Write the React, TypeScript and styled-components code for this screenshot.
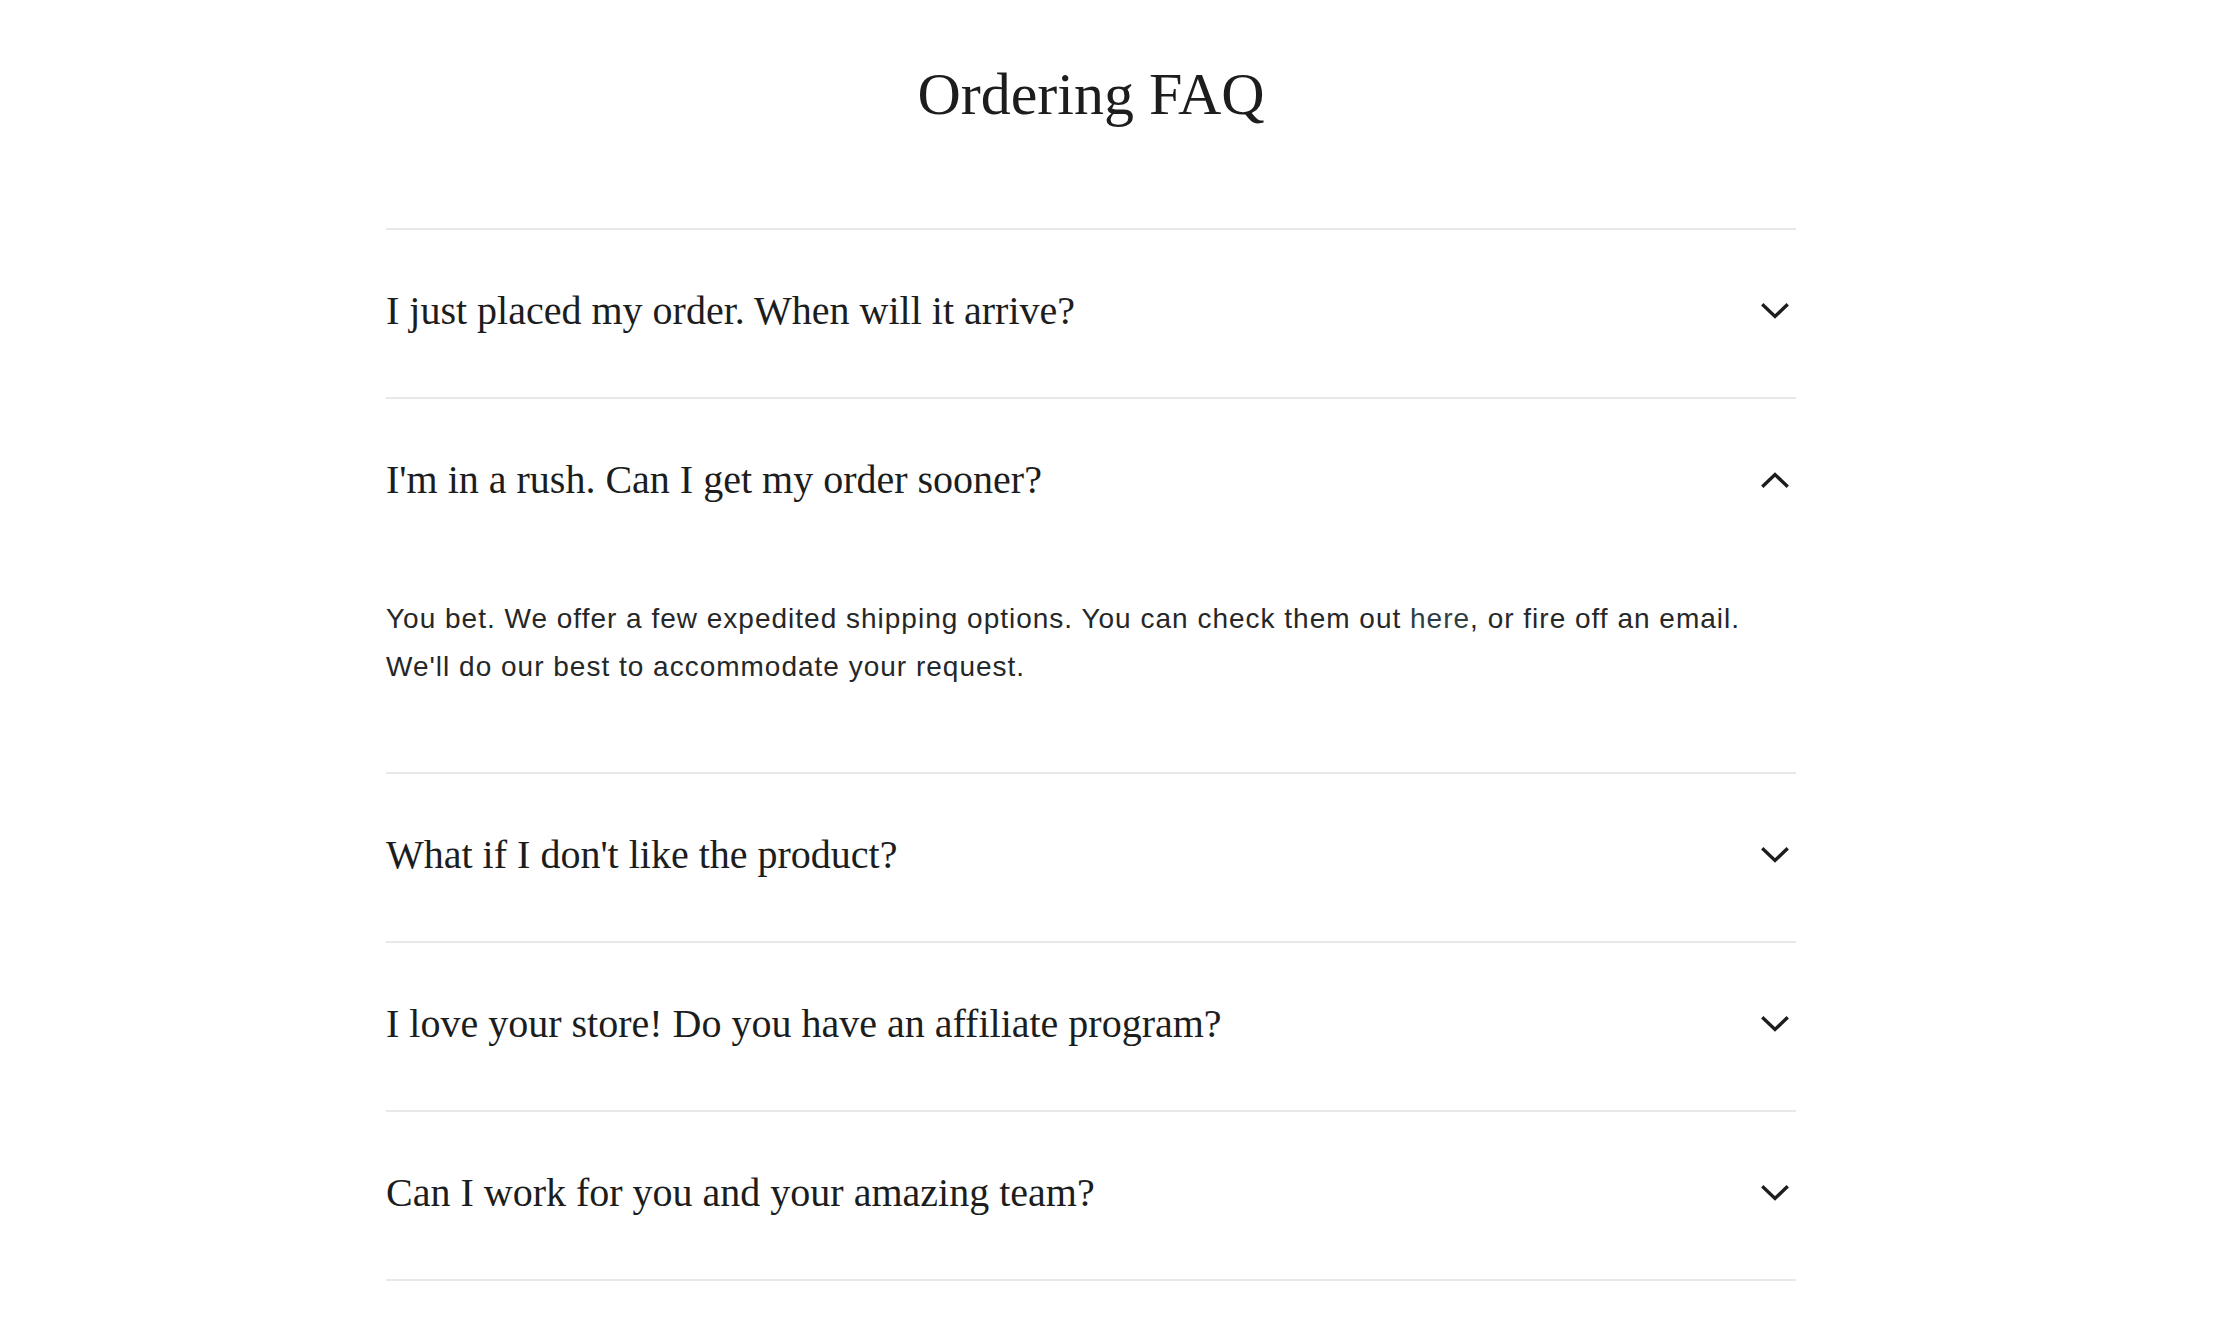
import React, { useState } from "react"
import styled, { createGlobalStyle } from "styled-components"

const GlobalStyle = createGlobalStyle`
  html, body {
    margin: 0;
    padding: 0;
    background: #ffffff;
  }
`

interface Faq {
  question: string,
  answer?: () => React.ReactNode,
}

const faqs: Faq[] = [
  { question: "I just placed my order. When will it arrive?" },
  {
    question: "I'm in a rush. Can I get my order sooner?",
    answer: () => (
      <>
        You bet. We offer a few expedited shipping options. You can check them out <Link href="#">here</Link>, or fire off an email.
        <br/>
        We'll do our best to accommodate your request.
      </>
    ),
  },
  { question: "What if I don't like the product?" },
  { question: "I love your store! Do you have an affiliate program?" },
  { question: "Can I work for you and your amazing team?" },
]

export default function App() {
  const [open, setOpen] = useState<number | null>(1)

  return (
    <Page>
      <GlobalStyle/>
      <Section>
        <Title>Ordering FAQ</Title>
        <List>
          {faqs.map((faq, i) => (
            <Item key={faq.question}>
              <Question onClick={() => setOpen(open === i ? null : i)}>
                <span>{faq.question}</span>
                <Chevron up={open === i}/>
              </Question>
              {open === i && faq.answer && <Answer>{faq.answer()}</Answer>}
            </Item>
          ))}
        </List>
      </Section>
    </Page>
  )
}

function Chevron({ up }: { up: boolean }) {
  return (
    <ChevronIcon viewBox="0 0 28 16" width="28" height="16" $up={up}>
      <path d="M2.5 2.5 L14 13.5 L25.5 2.5" fill="none" stroke="#1c1d1d" strokeWidth="3.4" strokeLinecap="square"/>
    </ChevronIcon>
  )
}

const Page = styled.main`
  box-sizing: border-box;
  min-height: 1320px;
  padding: 0 58px 0 0;
  color: #1c1d1d;
`

const Section = styled.section`
  margin: 0 auto;
  max-width: 1410px;
  padding-top: 52px;
`

const Title = styled.h1`
  font-family: "Liberation Serif", "Times New Roman", serif;
  font-size: 60px;
  font-weight: 400;
  line-height: 84px;
  margin: 0 0 92px;
  text-align: center;
`

const List = styled.div`
  border-top: 2px solid #e8e8e8;
`

const Item = styled.div`
  border-bottom: 2px solid #e8e8e8;
`

const Question = styled.button`
  align-items: center;
  background: none;
  border: 0;
  color: #1c1d1d;
  cursor: pointer;
  display: flex;
  font-family: "Liberation Serif", "Times New Roman", serif;
  font-size: 40px;
  height: 167px;
  justify-content: space-between;
  padding: 0 7px 6px 0;
  text-align: left;
  width: 100%;
`

const ChevronIcon = styled.svg<{ $up: boolean }>`
  flex: none;
  transform: ${({ $up }) => $up ? "rotate(180deg)" : "none"};
`

const Answer = styled.p`
  color: #262728;
  font-family: "Liberation Sans", Arial, sans-serif;
  font-size: 28px;
  letter-spacing: 1px;
  line-height: 48px;
  margin: 0;
  padding: 29px 0 81px;
`

const Link = styled.a`
  color: #2c3e44;
  text-decoration: none;
`
